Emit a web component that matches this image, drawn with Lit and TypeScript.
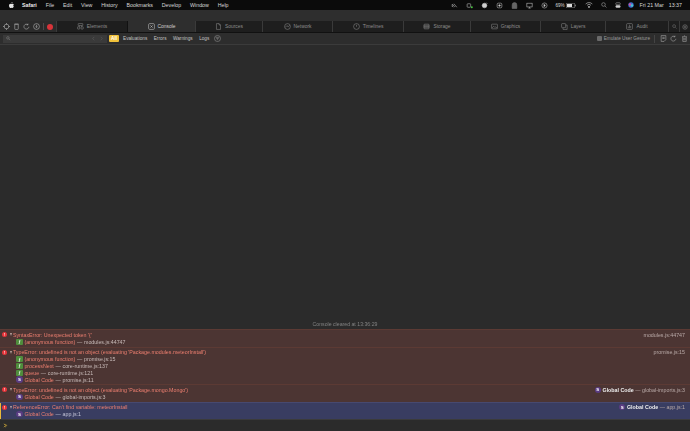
import { LitElement, html, css, svg } from "lit";
import { customElement } from "lit/decorators.js";

const tabIcons: Record<string, unknown> = {
  Elements: svg`<rect x="2" y="1" width="8" height="3.4" rx=".6"/><rect x="1" y="6.4" width="3.6" height="4" rx=".6"/><rect x="7" y="6.4" width="3.6" height="4" rx=".6"/><path d="M4 4.4v2M8 4.4v2"/>`,
  Console: svg`<rect x="1" y="1" width="10" height="10" rx="2"/><path d="M4 4l4 4M8 4l-4 4"/>`,
  Sources: svg`<path d="M2.5 1h4.5l2.5 2.5V11h-7zM7 1v2.5h2.5"/>`,
  Network: svg`<circle cx="6" cy="6" r="5"/><path d="M2 7.5l3-3 2 2 3-2.5"/>`,
  Timelines: svg`<circle cx="6" cy="6" r="5"/><path d="M6 3v3.5"/>`,
  Storage: svg`<rect x="1.5" y="2" width="9" height="8" rx="1.5"/><path d="M1.5 6h9M1.5 4h9M1.5 8h9"/>`,
  Graphics: svg`<rect x="1" y="2" width="10" height="8" rx=".8"/><path d="M2 8.5l2.5-3 2 2 1.5-1 2 2"/>`,
  Layers: svg`<rect x="1" y="1" width="7" height="7" rx="1"/><path d="M8 3.5h2.5V11h-7V8"/>`,
  Audit: svg`<rect x="1" y="1" width="10" height="10" rx="1.6"/><path d="M4 9V6M6 9V3M8 9V5"/>`,
};

const tabs = [
  { n: "Elements", w: 71 },
  { n: "Console", w: 68, sel: true },
  { n: "Sources", w: 67 },
  { n: "Network", w: 70 },
  { n: "Timelines", w: 71 },
  { n: "Storage", w: 67 },
  { n: "Graphics", w: 70 },
  { n: "Layers", w: 65 },
  { n: "Audit", w: 63 },
];

const menus = ["File", "Edit", "View", "History", "Bookmarks", "Develop", "Window", "Help"];

type Frame = { fn: string; loc: string; kind: "f" | "s" };
type Msg = { text: string; src?: string; srcFn?: string; frames: Frame[]; active?: boolean };

const msgs: Msg[] = [
  {
    text: "SyntaxError: Unexpected token '{'",
    src: "modules.js:44747",
    frames: [{ fn: "(anonymous function)", loc: "modules.js:44747", kind: "f" }],
  },
  {
    text: "TypeError: undefined is not an object (evaluating 'Package.modules.meteorInstall')",
    src: "promise.js:15",
    frames: [
      { fn: "(anonymous function)", loc: "promise.js:15", kind: "f" },
      { fn: "processNext", loc: "core-runtime.js:137", kind: "f" },
      { fn: "queue", loc: "core-runtime.js:121", kind: "f" },
      { fn: "Global Code", loc: "promise.js:11", kind: "s" },
    ],
  },
  {
    text: "TypeError: undefined is not an object (evaluating 'Package.mongo.Mongo')",
    src: "global-imports.js:3",
    srcFn: "Global Code",
    frames: [{ fn: "Global Code", loc: "global-imports.js:3", kind: "s" }],
  },
  {
    text: "ReferenceError: Can't find variable: meteorInstall",
    src: "app.js:1",
    srcFn: "Global Code",
    active: true,
    frames: [{ fn: "Global Code", loc: "app.js:1", kind: "s" }],
  },
];

@customElement("app-root")
export class AppRoot extends LitElement {
  static styles = css`
    :host { display: block; width: 690px; height: 431px; overflow: hidden; background: #2b2b2b;
      font-family: "Liberation Sans", Arial, sans-serif; font-size: 5.3px; color: #bdbdbd; }
    svg { display: block; flex: none; }
    .page { display: flex; flex-direction: column; height: 431px; filter: blur(.25px); }

    .menubar { height: 10px; flex: none; background: #0b0b0b; display: flex; align-items: center; padding: 0 8px 0 9px; color: #d8d8d8; font-size: 5.3px; }
    .apple { width: 13px; }
    .apple svg { fill: #e4e4e4; }
    .app { font-weight: 700; margin-right: 9px; color: #eee; }
    .menus { display: flex; gap: 8.8px; }
    .status { margin-left: auto; display: flex; align-items: center; }
    .status svg { fill: none; stroke: #cfcfcf; stroke-width: .9; }
    .status .ic { width: 15px; display: flex; justify-content: center; }
    .pct { font-size: 4.6px; margin: 0 1px 0 3px; }
    .clock { margin-left: 6px; display: flex; gap: 5px; }
    .wifi { margin-left: 9px; }
    .find { margin-left: 8px; }
    .ctrl { margin-left: 8px; }
    .siri { margin-left: 7px; }

    .titlebar { height: 11px; flex: none; background: #2e2e2e; }

    .tabbar { height: 11px; flex: none; display: flex; background: #1e1e1e; border-bottom: 1px solid #111; box-sizing: content-box; }
    .tools { width: 56px; flex: none; display: flex; align-items: center; gap: 3px; padding-left: 3px; box-sizing: border-box; background: #2b2b2b; }
    .tools svg { fill: none; stroke: #b4b4b4; stroke-width: 1; }
    .tsep { width: 1px; height: 7px; background: #4a4a4a; margin-left: 0; }
    .rec { width: 6px; height: 6px; border-radius: 50%; background: #d8343a; margin-left: 0; }
    .tab { display: flex; align-items: center; justify-content: center; gap: 3px; border-left: 1px solid #3a3a3a; box-sizing: border-box; color: #8d8d8d; font-size: 4.9px; }
    .tab svg { fill: none; stroke: #8d8d8d; stroke-width: .9; }
    .tab.sel { background: #2e2e2e; color: #d0d0d0; border-left-color: #111; }
    .tab.sel svg { stroke: #d0d0d0; }
    .square { width: 11px; flex: none; display: flex; align-items: center; justify-content: center; border-left: 1px solid #3a3a3a; box-sizing: border-box; }
    .square svg { fill: none; stroke: #8d8d8d; stroke-width: 1; }

    .filter { height: 12px; flex: none; display: flex; align-items: center; background: #2d2d2d; border-bottom: 1px solid #3b3b3b; box-sizing: border-box; padding: 0 2.500px 0 3px; font-size: 4.7px; }
    .search { width: 85px; height: 8px; background: #3a3a3a; display: flex; align-items: center; padding-left: 3px; box-sizing: border-box; }
    .search svg { fill: none; stroke: #9a9a9a; stroke-width: 1; }
    .nav { width: 19px; height: 8px; background: #3a3a3a; margin-left: 0; display: flex; align-items: center; justify-content: space-around; padding: 0 2px; box-sizing: border-box; }
    .nav svg { fill: none; stroke: #6f6f6f; stroke-width: 1; }
    .chips { display: flex; align-items: center; gap: 6.500px; margin-left: 2px; color: #c4c4c4; }
    .all { background: #f0c13a; color: #fff; height: 7px; width: 10px; border-radius: 1px; display: flex; align-items: center; justify-content: center; font-weight: 700; margin-right: -2.500px; }
    .filt { fill: none; stroke: #a6a6a6; stroke-width: .8; margin-left: -2px; }
    .fright { margin-left: auto; display: flex; align-items: center; color: #9b9b9b; }
    .cb { width: 5px; height: 5px; background: #6a6a6a; border-radius: 1px; margin-right: 2px; }
    .sep { width: 1px; height: 8px; background: #444; margin: 0 1px 0 4px; }
    .fright svg { fill: none; stroke: #a8a8a8; stroke-width: 1; margin-left: 3.500px; }

    .body { flex: 1; min-height: 0; display: flex; flex-direction: column; justify-content: flex-end; align-items: center; }
    .cleared { height: 11px; color: #838383; font-size: 5.2px; display: flex; align-items: center; }

    .msgs { flex: none; background: #4c3533; }
    .msg { border-top: 1px solid #5c3a34; padding: 1px 5px 1.500px 0; box-sizing: border-box; position: relative; }
    .msg.active { background: #393d61; border-top-color: #47496f; }
    .msg.active::before { content: ""; position: absolute; left: 0; top: 0; bottom: 0; width: 1px; background: #e9b93a; }
    .head { display: flex; align-items: center; height: 7px; color: #ee7f70; }
    .err { width: 5px; height: 5px; border-radius: 50%; background: #e5353b; color: #fff; margin-left: 2px; font-size: 4px; font-weight: 700; display: flex; align-items: center; justify-content: center; flex: none; }
    .tri { width: 0; height: 0; border-left: 1.900px solid transparent; border-right: 1.900px solid transparent; border-top: 3px solid #b9a4a0; margin: 0 1.400px 0 2.500px; flex: none; }
    .src { margin-left: auto; display: flex; align-items: center; gap: 1.500px; color: #b9aaa8; }
    .src b { color: #eee; font-weight: 700; }
    .frame { display: flex; align-items: center; height: 6.800px; padding-left: 16.300px; gap: 1.700px; color: #c9bcba; }
    .frame b { font-weight: 400; color: #ee7f70; }
    .fi { width: 6.400px; height: 6.400px; border-radius: 1px; color: #fff; display: flex; align-items: center; justify-content: center; font-size: 4.400px; font-weight: 700; flex: none; }
    .fi.f { background: #4f8d3c; font-style: italic; font-family: "Liberation Serif", serif; }
    .fi.s { background: #5a3c82; border-radius: 50%; }
    .msg.active .frame { color: #c4c5d8; }

    .prompt { height: 12px; flex: none; display: flex; align-items: center; padding-left: 3px; background: #2b2b2b; border-top: 1px solid #3b3b3b; box-sizing: border-box; }
    .prompt svg { fill: none; stroke: #efc23c; stroke-width: 1.400; }
  `;

  private icon(d: unknown, s = 6) {
    return html`<svg width=${s} height=${s} viewBox="0 0 12 12">${d}</svg>`;
  }

  private status() {
    const ics = [
      svg`<path d="M2 8l2-1V5l-2-1zM5 3l5 6M5 9l2-2"/>`,
      svg`<rect x="2" y="3" width="6" height="6" rx="1"/><circle cx="10" cy="9" r="1.6" fill="#46c83f" stroke="none"/>`,
      svg`<circle cx="6" cy="6" r="4" fill="#cfcfcf"/><path d="M9 1l2 2" />`,
      svg`<rect x="2" y="2" width="8" height="8" rx="2"/><circle cx="6" cy="6" r="1.4" fill="#cfcfcf"/>`,
      svg`<path d="M2 11V5a4 4 0 018 0v6z" fill="#666" stroke="#777"/>`,
      svg`<rect x="1.5" y="2" width="9" height="6.5"/><path d="M4 10.5h4M6 8.5v2"/>`,
      svg`<circle cx="6" cy="6" r="4.4"/><path d="M5 4l2.5 2L5 8z" fill="#cfcfcf"/>`,
    ];
    return html`<div class="status">
      ${ics.map((d) => html`<div class="ic">${this.icon(d, 7)}</div>`)}
      <span class="pct">69%</span>
      <svg width="10" height="5" viewBox="0 0 20 10"><rect x=".5" y=".5" width="17" height="9" rx="2"/><rect x="2" y="2" width="10" height="6" fill="#dcdcdc" stroke="none"/><path d="M19 3.5v3"/></svg>
      <svg class="wifi" width="8" height="6" viewBox="0 0 12 9"><path d="M1 3a7 7 0 0110 0M3 5a4 4 0 016 0"/><circle cx="6" cy="7.4" r=".9" fill="#cfcfcf"/></svg>
      <svg class="find" width="6" height="6" viewBox="0 0 12 12"><circle cx="5" cy="5" r="3.6"/><path d="M8 8l3 3"/></svg>
      <svg class="ctrl" width="6" height="6" viewBox="0 0 12 12"><rect x="1.5" y="1.5" width="9" height="4" rx="1.5"/><rect x="1.5" y="7" width="9" height="4" rx="1.5" fill="#cfcfcf"/></svg>
      <svg class="siri" width="6" height="6" viewBox="0 0 12 12"><circle cx="6" cy="6" r="5.4" fill="#3e6fd0" stroke="none"/><circle cx="4" cy="5" r="2.6" fill="#d24f9a" stroke="none"/><circle cx="8" cy="7" r="2.4" fill="#49c6cf" stroke="none"/></svg>
      <div class="clock"><span>Fri 21 Mar</span><span>13:37</span></div>
    </div>`;
  }

  render() {
    return html`<div class="page">
      <div class="menubar">
        <div class="apple"><svg width="5" height="6" viewBox="0 0 10 12"><path d="M7 0c.1 1.400-1 2.700-2.300 2.600C4.600 1.300 5.800.1 7 0zM9.600 8.500C9 10 8 12 6.800 12c-.8 0-1.100-.5-2-.5s-1.300.5-2 .5C1.500 12 0 9.500 0 7.100 0 4.700 1.500 3.300 3 3.300c.9 0 1.500.6 2 .6s1.300-.7 2.400-.6c.5 0 1.800.2 2.500 1.400-2 1.300-1.700 3.300-.3 3.800z"/></svg></div>
        <span class="app">Safari</span>
        <div class="menus">${menus.map((m) => html`<span>${m}</span>`)}</div>
        ${this.status()}
      </div>
      <div class="titlebar"></div>
      <div class="tabbar">
        <div class="tools">
          ${this.icon(svg`<circle cx="6" cy="6" r="4"/><path d="M6 0v3M6 9v3M0 6h3M9 6h3"/>`, 7)}
          ${this.icon(svg`<rect x="3" y="2" width="6" height="9" rx="1"/><path d="M2 2h8"/>`, 7)}
          ${this.icon(svg`<path d="M10 6.500a4.200 4.200 0 11-1.500-3.500M8.500 1v2.200H6.300"/>`, 7)}
          ${this.icon(svg`<circle cx="6" cy="6" r="5"/><path d="M6 3v4M4.500 6L6 8l1.500-2"/>`, 7)}
          <span class="tsep"></span>
          <span class="rec"></span>
        </div>
        ${tabs.map(
          (t) => html`<div class="tab ${t.sel ? "sel" : ""}" style="width:${t.w}px">
            ${this.icon(tabIcons[t.n], 7)}<span>${t.n}</span>
          </div>`
        )}
        <div class="square">${this.icon(svg`<circle cx="5" cy="5" r="3.400"/><path d="M8 8l3 3"/>`, 5)}</div>
        <div class="square">${this.icon(svg`<circle cx="6" cy="6" r="4.500"/><circle cx="6" cy="6" r="1.800"/>`, 6)}</div>
      </div>
      <div class="filter">
        <div class="search">${this.icon(svg`<circle cx="4.500" cy="4.500" r="3"/><path d="M7 7l3 3"/>`, 5)}</div>
        <div class="nav">
          ${this.icon(svg`<path d="M8 2L4 6l4 4"/>`, 5)}${this.icon(svg`<path d="M4 2l4 4-4 4"/>`, 5)}
        </div>
        <div class="chips">
          <span class="all">All</span><span>Evaluations</span><span>Errors</span><span>Warnings</span><span>Logs</span>
          <svg class="filt" width="7" height="7" viewBox="0 0 12 12"><circle cx="6" cy="6" r="5.200"/><path d="M3 4h6M4 6h4M5 8h2"/></svg>
        </div>
        <div class="fright">
          <span class="cb"></span><span>Emulate User Gesture</span><span class="sep"></span>
          ${this.icon(svg`<path d="M2 1h8v7l-3 3H2zM4 4h4M4 6h4"/>`, 7)}
          ${this.icon(svg`<path d="M10 6.500a4.200 4.200 0 11-1.500-3.500M8.500 1v2.200H6.300"/>`, 7)}
          ${this.icon(svg`<path d="M2 3h8M3 3v8h6V3M5 1.500h2M5 5v4M7 5v4"/>`, 7)}
        </div>
      </div>
      <div class="body"><div class="cleared">Console cleared at 13:36:29</div></div>
      <div class="msgs">
        ${msgs.map(
          (m) => html`<div class="msg ${m.active ? "active" : ""}">
            <div class="head">
              <span class="err">!</span><span class="tri"></span><span>${m.text}</span>
              <span class="src">
                ${m.srcFn ? html`<span class="fi s">S</span><b>${m.srcFn}</b><span>—</span>` : ""}
                <span>${m.src}</span>
              </span>
            </div>
            ${m.frames.map(
              (f) => html`<div class="frame">
                <span class="fi ${f.kind}">${f.kind === "f" ? "f" : "S"}</span><b>${f.fn}</b><span>—</span><span>${f.loc}</span>
              </div>`
            )}
          </div>`
        )}
      </div>
      <div class="prompt">${this.icon(svg`<path d="M2 2l4 4-4 4M5 2l4 4-4 4"/>`, 5)}</div>
    </div>`;
  }
}
